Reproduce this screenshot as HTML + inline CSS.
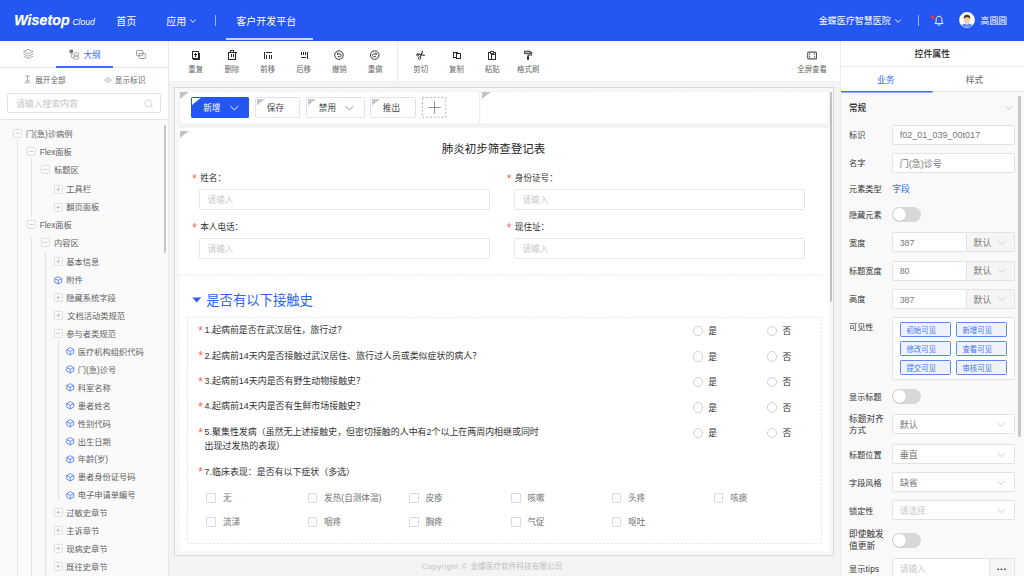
<!DOCTYPE html>
<html lang="zh-CN"><head><meta charset="utf-8"><title>客户开发平台</title>
<style>
html,body{margin:0;padding:0}
body{width:1024px;height:576px;overflow:hidden;position:relative;background:#f4f4f4;font-family:"Liberation Sans","Noto Sans CJK SC",sans-serif;color:#333}
.a{position:absolute;box-sizing:border-box}
.t{position:absolute;white-space:nowrap;line-height:12px;height:12px}
.c{transform:translateX(-50%)}
.b{font-weight:bold}
svg{overflow:visible}
</style></head><body>

<!-- header -->
<div class="a" style="left:0.00px;top:0.00px;width:1024.00px;height:40.50px;background:#2456f2"></div>
<div class="t " style="left:14.30px;top:14px;font-size:14.2px;color:#fff;font-weight:bold;font-style:italic;letter-spacing:0.05px;-webkit-text-stroke:0.25px #fff;line-height:16px;height:16px;margin-top:-2px">Wisetop</div>
<div class="t " style="left:72.40px;top:16px;font-size:8.6px;color:#fff;font-style:italic">Cloud</div>
<div class="t " style="left:116.20px;top:16px;font-size:10px;color:#fff;">首页</div>
<div class="t " style="left:166.20px;top:16px;font-size:10px;color:#fff;">应用</div>
<svg class="a" style="left:188.50px;top:17.50px;" width="8" height="6" viewBox="0 0 8 6"><path d="M1.2 1.5 L4 4.3 L6.8 1.5" fill="none" stroke="#fff" stroke-width="0.9"/></svg>
<div class="a" style="left:214.60px;top:15.20px;width:0.80px;height:10.60px;background:rgba(255,255,255,.55)"></div>
<div class="t " style="left:236.20px;top:16px;font-size:10px;color:#fff;">客户开发平台</div>
<div class="a" style="left:226.00px;top:38.30px;width:87.00px;height:2.20px;background:rgba(255,255,255,.75)"></div>
<div class="t " style="left:818.70px;top:15px;font-size:9px;color:#fff;">金蝶医疗智慧医院</div>
<svg class="a" style="left:893.60px;top:17.70px;" width="8" height="6" viewBox="0 0 8 6"><path d="M1.2 1.5 L4 4.3 L6.8 1.5" fill="none" stroke="#fff" stroke-width="0.9"/></svg>
<div class="a" style="left:918.20px;top:14.50px;width:0.80px;height:11.50px;background:rgba(255,255,255,.55)"></div>
<svg class="a" style="left:933.50px;top:14.50px;" width="10" height="12" viewBox="0 0 10 12"><path d="M5 1.2 C2.9 1.2 2.1 3 2.1 4.8 L2.1 7.2 L1 8.6 L9 8.6 L7.9 7.2 L7.9 4.8 C7.9 3 7.1 1.2 5 1.2 Z" fill="none" stroke="#fff" stroke-width="0.95" stroke-linejoin="round"/><path d="M4 10 L6 10" stroke="#fff" stroke-width="0.9" stroke-linecap="round"/></svg>
<div class="a" style="left:930.90px;top:15.20px;width:3.50px;height:3.50px;background:#ff2d3d;border-radius:50%"></div>
<svg class="a" style="left:959.00px;top:12.30px;" width="16" height="16" viewBox="0 0 16 16"><circle cx="8" cy="8" r="7.9" fill="#fff"/><clipPath id="av"><circle cx="8" cy="8" r="7.6"/></clipPath><g clip-path="url(#av)"><path d="M1.5 16 C1.5 12.6 4.5 11.6 8 11.6 C11.5 11.6 14.5 12.6 14.5 16 Z" fill="#5b8df5"/><path d="M6.6 11.2 L8 13 L9.4 11.2 Z" fill="#fff"/><ellipse cx="8" cy="7.6" rx="3.1" ry="3.7" fill="#f6c9a8"/><path d="M4.7 7.2 C4.3 4 6 2.7 8 2.7 C10.2 2.7 11.7 4 11.3 7.2 C10.8 5.6 9.6 5.2 8 5.2 C6.4 5.2 5.2 5.6 4.7 7.2 Z" fill="#4a2f25"/></g></svg>
<div class="t " style="left:980.60px;top:15px;font-size:8.8px;color:#fff;">高圆圆</div>
<!-- left panel -->
<div class="a" style="left:0.00px;top:40.50px;width:168.50px;height:535.50px;background:#fff;border-right:1px solid #e9e9e9"></div>
<div class="a" style="left:0.00px;top:67.20px;width:168.00px;height:0.80px;background:#e4e4e4"></div>
<svg class="a" style="left:22.80px;top:49.40px;" width="10.6" height="10.2" viewBox="0 0 10.6 10.2"><path d="M5.3 0.4 L10.1 2.65 L5.3 4.9 L0.5 2.65 Z M0.5 5 L5.3 7.3 L10.1 5 M0.5 7.2 L5.3 9.5 L10.1 7.2" fill="none" stroke="#8a8a8a" stroke-width="0.75" stroke-linejoin="round"/></svg>
<svg class="a" style="left:68.50px;top:49.00px;" width="11" height="11" viewBox="0 0 11 11"><rect x="0.6" y="0.6" width="3.4" height="3.4" fill="#777"/><path d="M2.3 4 L2.3 8.6 L5 8.6 M2.3 5.3 L5 5.3" fill="none" stroke="#888" stroke-width="0.7"/><rect x="5" y="3.9" width="4.6" height="2.8" rx="0.6" fill="none" stroke="#888" stroke-width="0.7"/><rect x="5" y="7.4" width="4.6" height="2.8" rx="0.6" fill="none" stroke="#888" stroke-width="0.7"/></svg>
<div class="t " style="left:83.50px;top:49px;font-size:8.6px;color:#3b6df6;">大纲</div>
<svg class="a" style="left:135.00px;top:49.00px;" width="12" height="11" viewBox="0 0 12 11"><rect x="1.5" y="1.4" width="6.4" height="5.3" rx="0.9" fill="none" stroke="#8a8a8a" stroke-width="0.85"/><rect x="3.9" y="4.5" width="6.5" height="5" rx="0.9" fill="none" stroke="#8a8a8a" stroke-width="0.85"/></svg>
<div class="a" style="left:56.20px;top:66.20px;width:56.70px;height:1.80px;background:#3b6df6"></div>
<svg class="a" style="left:24.20px;top:75.30px;" width="7" height="9" viewBox="0 0 7 9"><path d="M1 1 L6 1 M3.5 1 L3.5 6 M1 6 L6 6 M0.5 7.8 L6.5 7.8" fill="none" stroke="#777" stroke-width="0.6"/></svg>
<div class="t " style="left:35.20px;top:75px;font-size:7.65px;color:#666;">展开全部</div>
<svg class="a" style="left:103.80px;top:76.80px;" width="8" height="6" viewBox="0 0 8 6"><path d="M0.4 3 C2 0 6 0 7.6 3 C6 6 2 6 0.4 3 Z" fill="none" stroke="#999" stroke-width="0.5"/><circle cx="4" cy="3" r="1.2" fill="none" stroke="#999" stroke-width="0.5"/></svg>
<div class="t " style="left:114.80px;top:75px;font-size:7.65px;color:#666;">显示标识</div>
<div class="a" style="left:7.40px;top:93.30px;width:153.80px;height:20.10px;background:#fff;border:1px solid #e2e2e2;border-radius:1.5px"></div>
<div class="t " style="left:15.90px;top:98px;font-size:8.9px;color:#c6c6c6;">请输入搜索内容</div>
<svg class="a" style="left:143.50px;top:98.50px;" width="10" height="10" viewBox="0 0 10 10"><circle cx="4.4" cy="4.4" r="3.6" fill="none" stroke="#ccc" stroke-width="0.7"/><path d="M7 7 L9 9" stroke="#ccc" stroke-width="0.7"/></svg>
<div class="a" style="left:0.00px;top:119.00px;width:168.00px;height:457.00px;background:#fafafa;border-top:1px solid #e6e6e6"></div>
<div class="a" style="left:164.00px;top:125.00px;width:2.20px;height:128.00px;background:#c6c6c6;border-radius:1.1px"></div>
<div class="a" style="left:17.10px;top:140.40px;width:0.80px;height:435.60px;background:#e3e3e3"></div>
<div class="a" style="left:31.20px;top:158.20px;width:0.80px;height:59.30px;background:#e3e3e3"></div>
<div class="a" style="left:31.20px;top:237.10px;width:0.80px;height:338.90px;background:#e3e3e3"></div>
<div class="a" style="left:45.20px;top:252.10px;width:0.80px;height:323.90px;background:#e3e3e3"></div>
<div class="a" style="left:58.10px;top:340.40px;width:0.80px;height:160.10px;background:#e3e3e3"></div>
<svg class="a" style="left:13.00px;top:129.35px;" width="8.7" height="8.7" viewBox="0 0 8.7 8.7"><rect x="0.4" y="0.4" width="7.9" height="7.9" rx="0.8" fill="#fff" stroke="#d2d2d2" stroke-width="0.75"/><path d="M2.2 4.35 L6.5 4.35" stroke="#b0b0b0" stroke-width="0.7"/></svg>
<div class="t " style="left:25.70px;top:129px;font-size:8.25px;color:#606060;">门(急)诊病例</div>
<svg class="a" style="left:27.20px;top:147.35px;" width="8.7" height="8.7" viewBox="0 0 8.7 8.7"><rect x="0.4" y="0.4" width="7.9" height="7.9" rx="0.8" fill="#fff" stroke="#d2d2d2" stroke-width="0.75"/><path d="M2.2 4.35 L6.5 4.35" stroke="#b0b0b0" stroke-width="0.7"/></svg>
<div class="t " style="left:39.70px;top:147px;font-size:8.25px;color:#606060;">Flex面板</div>
<svg class="a" style="left:41.20px;top:165.40px;" width="8.7" height="8.7" viewBox="0 0 8.7 8.7"><rect x="0.4" y="0.4" width="7.9" height="7.9" rx="0.8" fill="#fff" stroke="#d2d2d2" stroke-width="0.75"/><path d="M2.2 4.35 L6.5 4.35" stroke="#b0b0b0" stroke-width="0.7"/></svg>
<div class="t " style="left:54.00px;top:165px;font-size:8.25px;color:#606060;">标题区</div>
<svg class="a" style="left:54.00px;top:184.65px;" width="8.7" height="8.7" viewBox="0 0 8.7 8.7"><rect x="0.4" y="0.4" width="7.9" height="7.9" rx="0.8" fill="#fff" stroke="#d2d2d2" stroke-width="0.75"/><path d="M2.2 4.35 L6.5 4.35" stroke="#b0b0b0" stroke-width="0.7"/><path d="M4.35 2.2 L4.35 6.5" stroke="#b0b0b0" stroke-width="0.7"/></svg>
<div class="t " style="left:66.20px;top:184px;font-size:8.25px;color:#606060;">工具栏</div>
<svg class="a" style="left:54.00px;top:202.65px;" width="8.7" height="8.7" viewBox="0 0 8.7 8.7"><rect x="0.4" y="0.4" width="7.9" height="7.9" rx="0.8" fill="#fff" stroke="#d2d2d2" stroke-width="0.75"/><path d="M2.2 4.35 L6.5 4.35" stroke="#b0b0b0" stroke-width="0.7"/><path d="M4.35 2.2 L4.35 6.5" stroke="#b0b0b0" stroke-width="0.7"/></svg>
<div class="t " style="left:66.20px;top:202px;font-size:8.25px;color:#606060;">翻页面板</div>
<svg class="a" style="left:27.20px;top:220.25px;" width="8.7" height="8.7" viewBox="0 0 8.7 8.7"><rect x="0.4" y="0.4" width="7.9" height="7.9" rx="0.8" fill="#fff" stroke="#d2d2d2" stroke-width="0.75"/><path d="M2.2 4.35 L6.5 4.35" stroke="#b0b0b0" stroke-width="0.7"/></svg>
<div class="t " style="left:39.70px;top:220px;font-size:8.25px;color:#606060;">Flex面板</div>
<svg class="a" style="left:41.20px;top:238.45px;" width="8.7" height="8.7" viewBox="0 0 8.7 8.7"><rect x="0.4" y="0.4" width="7.9" height="7.9" rx="0.8" fill="#fff" stroke="#d2d2d2" stroke-width="0.75"/><path d="M2.2 4.35 L6.5 4.35" stroke="#b0b0b0" stroke-width="0.7"/></svg>
<div class="t " style="left:54.00px;top:238px;font-size:8.25px;color:#606060;">内容区</div>
<svg class="a" style="left:54.00px;top:257.35px;" width="8.7" height="8.7" viewBox="0 0 8.7 8.7"><rect x="0.4" y="0.4" width="7.9" height="7.9" rx="0.8" fill="#fff" stroke="#d2d2d2" stroke-width="0.75"/><path d="M2.2 4.35 L6.5 4.35" stroke="#b0b0b0" stroke-width="0.7"/><path d="M4.35 2.2 L4.35 6.5" stroke="#b0b0b0" stroke-width="0.7"/></svg>
<div class="t " style="left:66.20px;top:257px;font-size:8.25px;color:#606060;">基本信息</div>
<svg class="a" style="left:54.00px;top:275.50px;" width="8.4" height="8.6" viewBox="0 0 8.4 8.6"><path d="M4.2 0.6 L7.7 2.5 L7.7 6.1 L4.2 8 L0.7 6.1 L0.7 2.5 Z M0.7 2.5 L4.2 4.4 L7.7 2.5 M4.2 4.4 L4.2 8" fill="none" stroke="#5482f6" stroke-width="0.9" stroke-linejoin="round"/></svg>
<div class="t " style="left:66.20px;top:275px;font-size:8.25px;color:#606060;">附件</div>
<svg class="a" style="left:54.00px;top:293.40px;" width="8.7" height="8.7" viewBox="0 0 8.7 8.7"><rect x="0.4" y="0.4" width="7.9" height="7.9" rx="0.8" fill="#fff" stroke="#d2d2d2" stroke-width="0.75"/><path d="M2.2 4.35 L6.5 4.35" stroke="#b0b0b0" stroke-width="0.7"/><path d="M4.35 2.2 L4.35 6.5" stroke="#b0b0b0" stroke-width="0.7"/></svg>
<div class="t " style="left:66.20px;top:293px;font-size:8.25px;color:#606060;">隐藏系统字段</div>
<svg class="a" style="left:54.00px;top:311.45px;" width="8.7" height="8.7" viewBox="0 0 8.7 8.7"><rect x="0.4" y="0.4" width="7.9" height="7.9" rx="0.8" fill="#fff" stroke="#d2d2d2" stroke-width="0.75"/><path d="M2.2 4.35 L6.5 4.35" stroke="#b0b0b0" stroke-width="0.7"/><path d="M4.35 2.2 L4.35 6.5" stroke="#b0b0b0" stroke-width="0.7"/></svg>
<div class="t " style="left:67.20px;top:311px;font-size:8.25px;color:#606060;">文档活动类规范</div>
<svg class="a" style="left:54.00px;top:329.25px;" width="8.7" height="8.7" viewBox="0 0 8.7 8.7"><rect x="0.4" y="0.4" width="7.9" height="7.9" rx="0.8" fill="#fff" stroke="#d2d2d2" stroke-width="0.75"/><path d="M2.2 4.35 L6.5 4.35" stroke="#b0b0b0" stroke-width="0.7"/></svg>
<div class="t " style="left:66.20px;top:329px;font-size:8.25px;color:#606060;">参与者类规范</div>
<svg class="a" style="left:66.00px;top:347.10px;" width="8.4" height="8.6" viewBox="0 0 8.4 8.6"><path d="M4.2 0.6 L7.7 2.5 L7.7 6.1 L4.2 8 L0.7 6.1 L0.7 2.5 Z M0.7 2.5 L4.2 4.4 L7.7 2.5 M4.2 4.4 L4.2 8" fill="none" stroke="#5482f6" stroke-width="0.9" stroke-linejoin="round"/></svg>
<div class="t " style="left:77.70px;top:347px;font-size:8.25px;color:#606060;">医疗机构组织代码</div>
<svg class="a" style="left:66.00px;top:365.20px;" width="8.4" height="8.6" viewBox="0 0 8.4 8.6"><path d="M4.2 0.6 L7.7 2.5 L7.7 6.1 L4.2 8 L0.7 6.1 L0.7 2.5 Z M0.7 2.5 L4.2 4.4 L7.7 2.5 M4.2 4.4 L4.2 8" fill="none" stroke="#5482f6" stroke-width="0.9" stroke-linejoin="round"/></svg>
<div class="t " style="left:77.70px;top:365px;font-size:8.25px;color:#606060;">门(急)诊号</div>
<svg class="a" style="left:66.00px;top:383.20px;" width="8.4" height="8.6" viewBox="0 0 8.4 8.6"><path d="M4.2 0.6 L7.7 2.5 L7.7 6.1 L4.2 8 L0.7 6.1 L0.7 2.5 Z M0.7 2.5 L4.2 4.4 L7.7 2.5 M4.2 4.4 L4.2 8" fill="none" stroke="#5482f6" stroke-width="0.9" stroke-linejoin="round"/></svg>
<div class="t " style="left:77.70px;top:383px;font-size:8.25px;color:#606060;">科室名称</div>
<svg class="a" style="left:66.00px;top:401.10px;" width="8.4" height="8.6" viewBox="0 0 8.4 8.6"><path d="M4.2 0.6 L7.7 2.5 L7.7 6.1 L4.2 8 L0.7 6.1 L0.7 2.5 Z M0.7 2.5 L4.2 4.4 L7.7 2.5 M4.2 4.4 L4.2 8" fill="none" stroke="#5482f6" stroke-width="0.9" stroke-linejoin="round"/></svg>
<div class="t " style="left:77.70px;top:401px;font-size:8.25px;color:#606060;">患者姓名</div>
<svg class="a" style="left:66.00px;top:419.00px;" width="8.4" height="8.6" viewBox="0 0 8.4 8.6"><path d="M4.2 0.6 L7.7 2.5 L7.7 6.1 L4.2 8 L0.7 6.1 L0.7 2.5 Z M0.7 2.5 L4.2 4.4 L7.7 2.5 M4.2 4.4 L4.2 8" fill="none" stroke="#5482f6" stroke-width="0.9" stroke-linejoin="round"/></svg>
<div class="t " style="left:77.70px;top:419px;font-size:8.25px;color:#606060;">性别代码</div>
<svg class="a" style="left:66.00px;top:436.90px;" width="8.4" height="8.6" viewBox="0 0 8.4 8.6"><path d="M4.2 0.6 L7.7 2.5 L7.7 6.1 L4.2 8 L0.7 6.1 L0.7 2.5 Z M0.7 2.5 L4.2 4.4 L7.7 2.5 M4.2 4.4 L4.2 8" fill="none" stroke="#5482f6" stroke-width="0.9" stroke-linejoin="round"/></svg>
<div class="t " style="left:77.70px;top:437px;font-size:8.25px;color:#606060;">出生日期</div>
<svg class="a" style="left:66.00px;top:454.80px;" width="8.4" height="8.6" viewBox="0 0 8.4 8.6"><path d="M4.2 0.6 L7.7 2.5 L7.7 6.1 L4.2 8 L0.7 6.1 L0.7 2.5 Z M0.7 2.5 L4.2 4.4 L7.7 2.5 M4.2 4.4 L4.2 8" fill="none" stroke="#5482f6" stroke-width="0.9" stroke-linejoin="round"/></svg>
<div class="t " style="left:77.70px;top:454px;font-size:8.25px;color:#606060;">年龄(岁)</div>
<svg class="a" style="left:66.00px;top:472.70px;" width="8.4" height="8.6" viewBox="0 0 8.4 8.6"><path d="M4.2 0.6 L7.7 2.5 L7.7 6.1 L4.2 8 L0.7 6.1 L0.7 2.5 Z M0.7 2.5 L4.2 4.4 L7.7 2.5 M4.2 4.4 L4.2 8" fill="none" stroke="#5482f6" stroke-width="0.9" stroke-linejoin="round"/></svg>
<div class="t " style="left:77.70px;top:472px;font-size:8.25px;color:#606060;">患者身份证号码</div>
<svg class="a" style="left:66.00px;top:490.60px;" width="8.4" height="8.6" viewBox="0 0 8.4 8.6"><path d="M4.2 0.6 L7.7 2.5 L7.7 6.1 L4.2 8 L0.7 6.1 L0.7 2.5 Z M0.7 2.5 L4.2 4.4 L7.7 2.5 M4.2 4.4 L4.2 8" fill="none" stroke="#5482f6" stroke-width="0.9" stroke-linejoin="round"/></svg>
<div class="t " style="left:77.70px;top:490px;font-size:8.25px;color:#606060;">电子申请单编号</div>
<svg class="a" style="left:54.00px;top:508.25px;" width="8.7" height="8.7" viewBox="0 0 8.7 8.7"><rect x="0.4" y="0.4" width="7.9" height="7.9" rx="0.8" fill="#fff" stroke="#d2d2d2" stroke-width="0.75"/><path d="M2.2 4.35 L6.5 4.35" stroke="#b0b0b0" stroke-width="0.7"/><path d="M4.35 2.2 L4.35 6.5" stroke="#b0b0b0" stroke-width="0.7"/></svg>
<div class="t " style="left:66.20px;top:508px;font-size:8.25px;color:#606060;">过敏史章节</div>
<svg class="a" style="left:54.00px;top:526.05px;" width="8.7" height="8.7" viewBox="0 0 8.7 8.7"><rect x="0.4" y="0.4" width="7.9" height="7.9" rx="0.8" fill="#fff" stroke="#d2d2d2" stroke-width="0.75"/><path d="M2.2 4.35 L6.5 4.35" stroke="#b0b0b0" stroke-width="0.7"/><path d="M4.35 2.2 L4.35 6.5" stroke="#b0b0b0" stroke-width="0.7"/></svg>
<div class="t " style="left:66.20px;top:526px;font-size:8.25px;color:#606060;">主诉章节</div>
<svg class="a" style="left:54.00px;top:544.25px;" width="8.7" height="8.7" viewBox="0 0 8.7 8.7"><rect x="0.4" y="0.4" width="7.9" height="7.9" rx="0.8" fill="#fff" stroke="#d2d2d2" stroke-width="0.75"/><path d="M2.2 4.35 L6.5 4.35" stroke="#b0b0b0" stroke-width="0.7"/><path d="M4.35 2.2 L4.35 6.5" stroke="#b0b0b0" stroke-width="0.7"/></svg>
<div class="t " style="left:66.20px;top:544px;font-size:8.25px;color:#606060;">现病史章节</div>
<svg class="a" style="left:54.00px;top:562.15px;" width="8.7" height="8.7" viewBox="0 0 8.7 8.7"><rect x="0.4" y="0.4" width="7.9" height="7.9" rx="0.8" fill="#fff" stroke="#d2d2d2" stroke-width="0.75"/><path d="M2.2 4.35 L6.5 4.35" stroke="#b0b0b0" stroke-width="0.7"/><path d="M4.35 2.2 L4.35 6.5" stroke="#b0b0b0" stroke-width="0.7"/></svg>
<div class="t " style="left:66.20px;top:562px;font-size:8.25px;color:#606060;">既往史章节</div>
<!-- center toolbar -->
<div class="a" style="left:169.00px;top:40.50px;width:671.00px;height:41.00px;background:#fff;border-bottom:1px solid #efefef"></div>
<svg class="a" style="left:189.70px;top:49.40px;shape-rendering:crispEdges" width="12" height="12" viewBox="0 0 12 12"><rect x="2" y="2.4" width="6.9" height="6.9" rx="0.8" fill="none" stroke="#2a2a2a" stroke-width="1"/><path d="M5.45 4.2 L5.45 7.5 M3.8 5.85 L7.1 5.85" stroke="#2a2a2a" stroke-width="1"/><path d="M9.75 3.6 L9.75 10.05 L3.3 10.05" fill="none" stroke="#2a2a2a" stroke-width="1.1"/></svg>
<div class="t c " style="left:195.70px;top:64px;font-size:7.42px;color:#666;">重复</div>
<svg class="a" style="left:225.80px;top:49.40px;shape-rendering:crispEdges" width="12" height="12" viewBox="0 0 12 12"><path d="M1.5 3 L10.6 3 M4.5 3 L4.5 1.6 L7.6 1.6 L7.6 3 M2.8 3 L2.8 10 L9.3 10 L9.3 3 M5.05 5 L5.05 8.3 M7.05 5 L7.05 8.3" fill="none" stroke="#2a2a2a" stroke-width="1"/></svg>
<div class="t c " style="left:231.80px;top:64px;font-size:7.42px;color:#666;">删除</div>
<svg class="a" style="left:261.75px;top:49.40px;shape-rendering:crispEdges" width="12" height="12" viewBox="0 0 12 12"><path d="M2.75 3 L2.75 10.3 M4.3 3.85 L9.9 3.85 M4.9 5.5 L4.9 10.3 M7.05 5.5 L7.05 10.3 M9.25 5.5 L9.25 10.3" fill="none" stroke="#2a2a2a" stroke-width="1"/></svg>
<div class="t c " style="left:267.75px;top:64px;font-size:7.42px;color:#666;">前移</div>
<svg class="a" style="left:297.55px;top:49.40px;shape-rendering:crispEdges" width="12" height="12" viewBox="0 0 12 12"><path d="M9.1 3.1 L9.1 10.1 M2.8 8.6 L7.9 8.6 M3.25 3.1 L3.25 6.4 M5.15 3.1 L5.15 6.4 M7.05 3.1 L7.05 6.4" fill="none" stroke="#2a2a2a" stroke-width="1"/></svg>
<div class="t c " style="left:303.55px;top:64px;font-size:7.42px;color:#666;">后移</div>
<svg class="a" style="left:333.30px;top:49.40px;" width="12" height="12" viewBox="0 0 12 12"><circle cx="5.95" cy="6.1" r="4.25" fill="none" stroke="#2a2a2a" stroke-width="0.95"/><path d="M4 4.9 L7 4.9 C8.5 4.9 8.5 7.7 7 7.7 L4.6 7.7 M5.3 3.6 L4 4.9 L5.3 6.2" fill="none" stroke="#2a2a2a" stroke-width="0.85"/></svg>
<div class="t c " style="left:339.30px;top:64px;font-size:7.42px;color:#666;">撤销</div>
<svg class="a" style="left:369.20px;top:49.40px;" width="12" height="12" viewBox="0 0 12 12"><circle cx="5.7" cy="6.1" r="4.25" fill="none" stroke="#2a2a2a" stroke-width="0.95"/><path d="M7.7 4.9 L4.7 4.9 C3.2 4.9 3.2 7.7 4.7 7.7 L7.1 7.7 M6.4 3.6 L7.7 4.9 L6.4 6.2" fill="none" stroke="#2a2a2a" stroke-width="0.85"/></svg>
<div class="t c " style="left:375.20px;top:64px;font-size:7.42px;color:#666;">重做</div>
<svg class="a" style="left:414.70px;top:49.40px;" width="12" height="12" viewBox="0 0 12 12"><path d="M7.7 1.8 L5.2 8 M1.9 4.7 L9.8 6.4" fill="none" stroke="#2a2a2a" stroke-width="1.05"/><circle cx="4.6" cy="9.2" r="1.2" fill="none" stroke="#2a2a2a" stroke-width="0.85"/><circle cx="2.7" cy="5.9" r="1.1" fill="none" stroke="#2a2a2a" stroke-width="0.85"/></svg>
<div class="t c " style="left:420.70px;top:64px;font-size:7.42px;color:#666;">剪切</div>
<svg class="a" style="left:450.50px;top:49.40px;shape-rendering:crispEdges" width="12" height="12" viewBox="0 0 12 12"><rect x="2.5" y="3.1" width="3.7" height="5.3" fill="none" stroke="#2a2a2a" stroke-width="1"/><rect x="5" y="4.1" width="4.3" height="5.6" fill="#fff" stroke="#2a2a2a" stroke-width="1"/></svg>
<div class="t c " style="left:456.50px;top:64px;font-size:7.42px;color:#666;">复制</div>
<svg class="a" style="left:486.20px;top:49.40px;shape-rendering:crispEdges" width="12" height="12" viewBox="0 0 12 12"><path d="M4.1 3.4 L2.2 3.4 L2.2 10 L5.4 10 M7.5 3.4 L9.4 3.4 L9.4 5.6" fill="none" stroke="#2a2a2a" stroke-width="1"/><rect x="4.1" y="2" width="3.4" height="2" fill="none" stroke="#2a2a2a" stroke-width="0.9"/><rect x="5.5" y="5.8" width="4.1" height="4.3" fill="none" stroke="#2a2a2a" stroke-width="1"/></svg>
<div class="t c " style="left:492.20px;top:64px;font-size:7.42px;color:#666;">粘贴</div>
<svg class="a" style="left:522.20px;top:49.40px;" width="12" height="12" viewBox="0 0 12 12"><rect x="2.4" y="2.2" width="6.2" height="2.5" rx="0.6" fill="#bbb" stroke="#2a2a2a" stroke-width="0.95"/><path d="M8.6 3.4 L9.7 3.4 L9.7 6.1 L6 6.1 L6 7.4" fill="none" stroke="#2a2a2a" stroke-width="0.95"/><rect x="4.95" y="7.3" width="2.1" height="3.4" rx="0.3" fill="#2a2a2a"/></svg>
<div class="t c " style="left:528.20px;top:64px;font-size:7.42px;color:#666;">格式刷</div>
<svg class="a" style="left:806.10px;top:49.40px;" width="12" height="12" viewBox="0 0 12 12"><rect x="1.7" y="3.1" width="8.8" height="6.8" rx="1" fill="none" stroke="#555" stroke-width="1.1"/><path d="M3.5 5.7 L3.5 4.9 L4.3 4.9 M7.9 4.9 L8.7 4.9 L8.7 5.7 M8.7 7.3 L8.7 8.1 L7.9 8.1 M4.3 8.1 L3.5 8.1 L3.5 7.3" fill="none" stroke="#333" stroke-width="0.9"/></svg>
<div class="t c " style="left:812.10px;top:64px;font-size:7.42px;color:#666;">全屏查看</div>
<div class="a" style="left:397.40px;top:40.50px;width:0.80px;height:40.50px;background:#e9e9e9"></div>
<!-- canvas -->
<div class="a" style="left:174.30px;top:86.80px;width:660.00px;height:469.60px;background:#f8f8f8;border:1px solid #d9d9d9"></div>
<div class="a" style="left:178.70px;top:90.80px;width:650.60px;height:460.50px;background:#fff"></div>
<div class="a" style="left:178.70px;top:124.10px;width:650.60px;height:4.10px;background:#f4f4f4"></div>
<div class="a" style="left:178.60px;top:90.80px;width:650.60px;height:33.30px;background:#fff"></div>
<svg class="a" style="left:178.60px;top:90.80px" width="301.30" height="33.30"><rect x="0.4" y="0.4" width="300.50" height="32.50" fill="none" stroke="#e2e2e2" stroke-width="0.8" stroke-dasharray="2.2 1.7"/></svg>
<svg class="a" style="left:479.10px;top:90.80px" width="350.40" height="33.30"><rect x="0.4" y="0.4" width="349.60" height="32.50" fill="none" stroke="#e2e2e2" stroke-width="0.8" stroke-dasharray="2.2 1.7"/></svg>
<svg class="a" style="left:180.20px;top:92.10px;" width="8.8" height="7.040000000000001" viewBox="0 0 8.8 7.040000000000001"><path d="M0 0 L8.8 0 L0 7.040000000000001 Z" fill="#c2c2c2"/></svg>
<svg class="a" style="left:481.80px;top:92.10px;" width="8.8" height="7.040000000000001" viewBox="0 0 8.8 7.040000000000001"><path d="M0 0 L8.8 0 L0 7.040000000000001 Z" fill="#c2c2c2"/></svg>
<div class="a" style="left:190.90px;top:97.20px;width:58.00px;height:20.50px;background:#2456f2;border-radius:1.5px"></div>
<svg class="a" style="left:192.00px;top:98.40px;" width="8.6" height="6.88" viewBox="0 0 8.6 6.88"><path d="M0 0 L8.6 0 L0 6.88 Z" fill="#fff"/></svg>
<div class="t " style="left:203.20px;top:102px;font-size:8.6px;color:#fff;">新增</div>
<svg class="a" style="left:229.60px;top:104.90px;" width="9" height="6" viewBox="0 0 9 6"><path d="M0.4 1 L4.4 4.8 L8.4 1" fill="none" stroke="#fff" stroke-width="0.95"/></svg>
<div class="a" style="left:254.90px;top:97.20px;width:44.90px;height:20.50px;background:#fff;border:1px solid #e4e4e4;border-radius:1.5px"></div>
<svg class="a" style="left:256.70px;top:98.60px;" width="8" height="6.4" viewBox="0 0 8 6.4"><path d="M0 0 L8 0 L0 6.4 Z" fill="#c6c6c6"/></svg>
<div class="t " style="left:266.80px;top:102px;font-size:8.6px;color:#444;">保存</div>
<div class="a" style="left:306.30px;top:97.20px;width:58.60px;height:20.50px;background:#fff;border:1px solid #e4e4e4;border-radius:1.5px"></div>
<svg class="a" style="left:308.10px;top:98.60px;" width="8" height="6.4" viewBox="0 0 8 6.4"><path d="M0 0 L8 0 L0 6.4 Z" fill="#c6c6c6"/></svg>
<div class="t " style="left:318.80px;top:102px;font-size:8.6px;color:#444;">禁用</div>
<svg class="a" style="left:345.00px;top:104.90px;" width="9" height="6" viewBox="0 0 9 6"><path d="M0.4 1 L4.4 4.8 L8.4 1" fill="none" stroke="#777" stroke-width="0.8"/></svg>
<div class="a" style="left:370.30px;top:97.20px;width:45.60px;height:20.50px;background:#fff;border:1px solid #e4e4e4;border-radius:1.5px"></div>
<svg class="a" style="left:372.10px;top:98.60px;" width="8" height="6.4" viewBox="0 0 8 6.4"><path d="M0 0 L8 0 L0 6.4 Z" fill="#c6c6c6"/></svg>
<div class="t " style="left:382.80px;top:102px;font-size:8.6px;color:#444;">推出</div>
<svg class="a" style="left:421.60px;top:97.10px" width="24.20" height="20.60"><rect x="0.4" y="0.4" width="23.40" height="19.80" fill="#fff" stroke="#9a9a9a" stroke-width="0.8" stroke-dasharray="1.9 1.9"/></svg>
<svg class="a" style="left:427.80px;top:101.00px;" width="13" height="13" viewBox="0 0 13 13"><path d="M6.5 0.3 L6.5 12.7 M0.3 6.5 L12.7 6.5" stroke="#666" stroke-width="0.7"/></svg>
<svg class="a" style="left:178.70px;top:274.60px" width="651.60" height="1.00"><line x1="0.00" y1="0.00" x2="650.60" y2="0.00" stroke="#e2e2e2" stroke-width="0.8" stroke-dasharray="2.2 1.7"/></svg>
<svg class="a" style="left:180.20px;top:130.60px;" width="8.8" height="7.040000000000001" viewBox="0 0 8.8 7.040000000000001"><path d="M0 0 L8.8 0 L0 7.040000000000001 Z" fill="#c2c2c2"/></svg>
<div class="t c " style="left:493.40px;top:143px;font-size:11.5px;color:#222;">肺炎初步筛查登记表</div>
<div class="t" style="left:192.25px;top:173px;font-size:12px;color:#f7635a">*</div>
<div class="t " style="left:200.20px;top:172px;font-size:8.6px;color:#333;">姓名：</div>
<div class="a" style="left:199.40px;top:189.30px;width:290.40px;height:20.30px;background:#fff;border:1px solid #e7e7e7;border-radius:2px"></div>
<div class="t " style="left:207.60px;top:194px;font-size:8.6px;color:#cacaca;">请输入</div>
<div class="t" style="left:506.85px;top:173px;font-size:12px;color:#f7635a">*</div>
<div class="t " style="left:514.80px;top:172px;font-size:8.6px;color:#333;">身份证号：</div>
<div class="a" style="left:514.30px;top:189.30px;width:290.40px;height:20.30px;background:#fff;border:1px solid #e7e7e7;border-radius:2px"></div>
<div class="t " style="left:522.50px;top:194px;font-size:8.6px;color:#cacaca;">请输入</div>
<div class="t" style="left:192.25px;top:222px;font-size:12px;color:#f7635a">*</div>
<div class="t " style="left:200.20px;top:221px;font-size:8.6px;color:#333;">本人电话：</div>
<div class="a" style="left:199.40px;top:238.40px;width:290.40px;height:20.80px;background:#fff;border:1px solid #e7e7e7;border-radius:2px"></div>
<div class="t " style="left:207.60px;top:243px;font-size:8.6px;color:#cacaca;">请输入</div>
<div class="t" style="left:506.85px;top:222px;font-size:12px;color:#f7635a">*</div>
<div class="t " style="left:514.80px;top:221px;font-size:8.6px;color:#333;">现住址：</div>
<div class="a" style="left:514.30px;top:238.40px;width:290.40px;height:20.80px;background:#fff;border:1px solid #e7e7e7;border-radius:2px"></div>
<div class="t " style="left:522.50px;top:243px;font-size:8.6px;color:#cacaca;">请输入</div>
<svg class="a" style="left:178.80px;top:275.00px" width="1.00" height="277.30"><line x1="0.00" y1="0.00" x2="0.00" y2="276.30" stroke="#ececec" stroke-width="0.8" stroke-dasharray="2.2 1.7"/></svg>
<svg class="a" style="left:192.20px;top:297.40px;" width="9.4" height="6" viewBox="0 0 9.4 6"><path d="M0.2 0.5 L9.2 0.5 L4.7 5.5 Z" fill="#2f61f3"/></svg>
<div class="t " style="left:206.20px;top:295px;font-size:13.35px;color:#3163f3;line-height:18px;height:18px;margin-top:-3px">是否有以下接触史</div>
<svg class="a" style="left:187.20px;top:316.80px" width="634.80" height="226.90"><rect x="0.4" y="0.4" width="634.00" height="226.10" fill="none" stroke="#e2e2e2" stroke-width="0.8" stroke-dasharray="2.2 1.7"/></svg>
<div class="t" style="left:198.15px;top:325px;font-size:12px;color:#f7635a">*</div>
<div class="t " style="left:204.60px;top:324px;font-size:8.95px;color:#333;">1.起病前是否在武汉居住，旅行过？</div>
<div class="t" style="left:198.15px;top:350px;font-size:12px;color:#f7635a">*</div>
<div class="t " style="left:204.60px;top:350px;font-size:8.95px;color:#333;">2.起病前14天内是否接触过武汉居住、旅行过人员或类似症状的病人？</div>
<div class="t" style="left:198.15px;top:376px;font-size:12px;color:#f7635a">*</div>
<div class="t " style="left:204.60px;top:375px;font-size:8.95px;color:#333;">3.起病前14天内是否有野生动物接触史？</div>
<div class="t" style="left:198.15px;top:401px;font-size:12px;color:#f7635a">*</div>
<div class="t " style="left:204.60px;top:400px;font-size:8.95px;color:#333;">4.起病前14天内是否有生鲜市场接触史？</div>
<div class="t" style="left:198.15px;top:427px;font-size:12px;color:#f7635a">*</div>
<div class="t " style="left:204.60px;top:426px;font-size:8.95px;color:#333;">5.聚集性发病（虽然无上述接触史，但密切接触的人中有2个以上在两周内相继或同时</div>
<div class="t" style="left:198.15px;top:466px;font-size:12px;color:#f7635a">*</div>
<div class="t " style="left:204.60px;top:466px;font-size:8.95px;color:#333;">7.临床表现：是否有以下症状（多选）</div>
<div class="t " style="left:204.60px;top:440px;font-size:8.95px;color:#333;">出现过发热的表现）</div>
<div class="a" style="left:693.00px;top:325.90px;width:10.20px;height:10.20px;background:#fff;border:1px solid #d2d2d2;border-radius:50%"></div>
<div class="t " style="left:708.30px;top:325px;font-size:8.8px;color:#333;">是</div>
<div class="a" style="left:767.20px;top:325.90px;width:10.20px;height:10.20px;background:#fff;border:1px solid #d2d2d2;border-radius:50%"></div>
<div class="t " style="left:782.60px;top:325px;font-size:8.8px;color:#333;">否</div>
<div class="a" style="left:693.00px;top:351.40px;width:10.20px;height:10.20px;background:#fff;border:1px solid #d2d2d2;border-radius:50%"></div>
<div class="t " style="left:708.30px;top:351px;font-size:8.8px;color:#333;">是</div>
<div class="a" style="left:767.20px;top:351.40px;width:10.20px;height:10.20px;background:#fff;border:1px solid #d2d2d2;border-radius:50%"></div>
<div class="t " style="left:782.60px;top:351px;font-size:8.8px;color:#333;">否</div>
<div class="a" style="left:693.00px;top:376.90px;width:10.20px;height:10.20px;background:#fff;border:1px solid #d2d2d2;border-radius:50%"></div>
<div class="t " style="left:708.30px;top:376px;font-size:8.8px;color:#333;">是</div>
<div class="a" style="left:767.20px;top:376.90px;width:10.20px;height:10.20px;background:#fff;border:1px solid #d2d2d2;border-radius:50%"></div>
<div class="t " style="left:782.60px;top:376px;font-size:8.8px;color:#333;">否</div>
<div class="a" style="left:693.00px;top:402.40px;width:10.20px;height:10.20px;background:#fff;border:1px solid #d2d2d2;border-radius:50%"></div>
<div class="t " style="left:708.30px;top:402px;font-size:8.8px;color:#333;">是</div>
<div class="a" style="left:767.20px;top:402.40px;width:10.20px;height:10.20px;background:#fff;border:1px solid #d2d2d2;border-radius:50%"></div>
<div class="t " style="left:782.60px;top:402px;font-size:8.8px;color:#333;">否</div>
<div class="a" style="left:693.00px;top:427.90px;width:10.20px;height:10.20px;background:#fff;border:1px solid #d2d2d2;border-radius:50%"></div>
<div class="t " style="left:708.30px;top:427px;font-size:8.8px;color:#333;">是</div>
<div class="a" style="left:767.20px;top:427.90px;width:10.20px;height:10.20px;background:#fff;border:1px solid #d2d2d2;border-radius:50%"></div>
<div class="t " style="left:782.60px;top:427px;font-size:8.8px;color:#333;">否</div>
<div class="a" style="left:206.30px;top:492.90px;width:9.80px;height:9.80px;background:#fff;border:1px solid #dadada;border-radius:1px"></div>
<div class="t " style="left:222.90px;top:492px;font-size:8.6px;color:#737373;">无</div>
<div class="a" style="left:307.50px;top:492.90px;width:9.80px;height:9.80px;background:#fff;border:1px solid #dadada;border-radius:1px"></div>
<div class="t " style="left:324.10px;top:492px;font-size:8.6px;color:#737373;">发热(自测体温)</div>
<div class="a" style="left:408.90px;top:492.90px;width:9.80px;height:9.80px;background:#fff;border:1px solid #dadada;border-radius:1px"></div>
<div class="t " style="left:425.50px;top:492px;font-size:8.6px;color:#737373;">皮疹</div>
<div class="a" style="left:510.80px;top:492.90px;width:9.80px;height:9.80px;background:#fff;border:1px solid #dadada;border-radius:1px"></div>
<div class="t " style="left:527.40px;top:492px;font-size:8.6px;color:#737373;">咳嗽</div>
<div class="a" style="left:611.60px;top:492.90px;width:9.80px;height:9.80px;background:#fff;border:1px solid #dadada;border-radius:1px"></div>
<div class="t " style="left:628.20px;top:492px;font-size:8.6px;color:#737373;">头疼</div>
<div class="a" style="left:713.60px;top:492.90px;width:9.80px;height:9.80px;background:#fff;border:1px solid #dadada;border-radius:1px"></div>
<div class="t " style="left:730.20px;top:492px;font-size:8.6px;color:#737373;">咳痰</div>
<div class="a" style="left:206.30px;top:516.80px;width:9.80px;height:9.80px;background:#fff;border:1px solid #dadada;border-radius:1px"></div>
<div class="t " style="left:222.90px;top:516px;font-size:8.6px;color:#737373;">流涕</div>
<div class="a" style="left:307.50px;top:516.80px;width:9.80px;height:9.80px;background:#fff;border:1px solid #dadada;border-radius:1px"></div>
<div class="t " style="left:324.10px;top:516px;font-size:8.6px;color:#737373;">咽疼</div>
<div class="a" style="left:408.90px;top:516.80px;width:9.80px;height:9.80px;background:#fff;border:1px solid #dadada;border-radius:1px"></div>
<div class="t " style="left:425.50px;top:516px;font-size:8.6px;color:#737373;">胸疼</div>
<div class="a" style="left:510.80px;top:516.80px;width:9.80px;height:9.80px;background:#fff;border:1px solid #dadada;border-radius:1px"></div>
<div class="t " style="left:527.40px;top:516px;font-size:8.6px;color:#737373;">气促</div>
<div class="a" style="left:611.60px;top:516.80px;width:9.80px;height:9.80px;background:#fff;border:1px solid #dadada;border-radius:1px"></div>
<div class="t " style="left:628.20px;top:516px;font-size:8.6px;color:#737373;">呕吐</div>
<div class="a" style="left:829.50px;top:91.50px;width:2.40px;height:210.40px;background:#c0c0c0;border-radius:1.2px"></div>
<div class="t c " style="left:492.00px;top:561px;font-size:7.66px;color:#bdbdbd;"><span style="letter-spacing:0.5px">Copyright © </span>金蝶医疗软件科技有限公司</div>
<!-- right panel -->
<div class="a" style="left:840.00px;top:40.50px;width:184.00px;height:535.50px;background:#f9f9f9;border-left:1px solid #ececec"></div>
<div class="a" style="left:840.50px;top:40.50px;width:183.50px;height:51.20px;background:#fff"></div>
<div class="t c " style="left:932.30px;top:48px;font-size:8.9px;color:#222;font-weight:500">控件属性</div>
<div class="a" style="left:840.50px;top:66.00px;width:183.50px;height:0.80px;background:#ececec"></div>
<div class="t c " style="left:885.80px;top:74px;font-size:8.7px;color:#3b6df6;">业务</div>
<div class="t c " style="left:974.50px;top:74px;font-size:8.7px;color:#666;">样式</div>
<div class="a" style="left:840.50px;top:91.00px;width:183.50px;height:0.80px;background:#e6e6e6"></div>
<svg class="a" style="left:840.50px;top:90.70px;" width="92" height="2" viewBox="0 0 92 2"><rect x="0" y="0" width="91.7" height="1.5" fill="#3b6df6"/></svg>
<div class="a" style="left:1018.00px;top:96.00px;width:2.60px;height:341.00px;background:#c6c6c6;border-radius:1.3px"></div>
<div class="t " style="left:848.90px;top:102px;font-size:8.6px;color:#222;font-weight:500">常规</div>
<svg class="a" style="left:1004.80px;top:104.60px;" width="8" height="6" viewBox="0 0 8 6"><path d="M0.5 1 L4 4.5 L7.5 1" fill="none" stroke="#c4c4c4" stroke-width="0.8"/></svg>
<div class="t " style="left:849.00px;top:130px;font-size:8.15px;color:#333;">标识</div>
<div class="a" style="left:892.00px;top:125.00px;width:122.60px;height:20.00px;background:#fff;border:1px solid #e3e3e3;border-radius:1.5px"></div>
<div class="t " style="left:899.70px;top:129px;font-size:9.05px;color:#777;">f02_01_039_00t017</div>
<div class="t " style="left:849.00px;top:158px;font-size:8.15px;color:#333;">名字</div>
<div class="a" style="left:892.00px;top:153.00px;width:122.60px;height:20.00px;background:#fff;border:1px solid #e3e3e3;border-radius:1.5px"></div>
<div class="t " style="left:899.70px;top:158px;font-size:9.05px;color:#777;">门(急)诊号</div>
<div class="t " style="left:849.00px;top:184px;font-size:8.15px;color:#333;">元素类型</div>
<div class="t " style="left:892.20px;top:183px;font-size:8.9px;color:#2f6bdc;">字段</div>
<div class="t " style="left:849.00px;top:210px;font-size:8.15px;color:#333;">隐藏元素</div>
<div class="a" style="left:892.20px;top:206.80px;width:29.20px;height:15.20px;background:#d8d8d8;border-radius:7.6px"></div>
<div class="a" style="left:893.20px;top:207.80px;width:13.20px;height:13.20px;background:#fff;border-radius:50%;box-shadow:0 0.5px 1px rgba(0,0,0,.18)"></div>
<div class="t " style="left:849.00px;top:238px;font-size:8.15px;color:#333;">宽度</div>
<div class="a" style="left:892.00px;top:232.00px;width:122.60px;height:20.00px;background:#fff;border:1px solid #e3e3e3;border-radius:1.5px"></div>
<div class="a" style="left:966.00px;top:232.00px;width:48.60px;height:20.00px;background:#f5f5f5;border:1px solid #e3e3e3;border-radius:0 1.5px 1.5px 0"></div>
<div class="t " style="left:899.70px;top:237px;font-size:8.9px;color:#777;">387</div>
<div class="t " style="left:973.60px;top:237px;font-size:8.8px;color:#777;">默认</div>
<svg class="a" style="left:997.60px;top:239.50px;" width="8" height="6" viewBox="0 0 8 6"><path d="M0.5 1 L4 4.5 L7.5 1" fill="none" stroke="#c4c4c4" stroke-width="0.8"/></svg>
<div class="t " style="left:849.00px;top:266px;font-size:8.15px;color:#333;">标题宽度</div>
<div class="a" style="left:892.00px;top:261.00px;width:122.60px;height:20.00px;background:#fff;border:1px solid #e3e3e3;border-radius:1.5px"></div>
<div class="a" style="left:966.00px;top:261.00px;width:48.60px;height:20.00px;background:#f5f5f5;border:1px solid #e3e3e3;border-radius:0 1.5px 1.5px 0"></div>
<div class="t " style="left:899.70px;top:265px;font-size:8.9px;color:#777;">80</div>
<div class="t " style="left:973.60px;top:265px;font-size:8.8px;color:#777;">默认</div>
<svg class="a" style="left:997.60px;top:267.80px;" width="8" height="6" viewBox="0 0 8 6"><path d="M0.5 1 L4 4.5 L7.5 1" fill="none" stroke="#c4c4c4" stroke-width="0.8"/></svg>
<div class="t " style="left:849.00px;top:294px;font-size:8.15px;color:#333;">高度</div>
<div class="a" style="left:892.00px;top:289.00px;width:122.60px;height:20.00px;background:#fff;border:1px solid #e3e3e3;border-radius:1.5px"></div>
<div class="a" style="left:966.00px;top:289.00px;width:48.60px;height:20.00px;background:#f5f5f5;border:1px solid #e3e3e3;border-radius:0 1.5px 1.5px 0"></div>
<div class="t " style="left:899.70px;top:294px;font-size:8.9px;color:#777;">387</div>
<div class="t " style="left:973.60px;top:294px;font-size:8.8px;color:#777;">默认</div>
<svg class="a" style="left:997.60px;top:296.10px;" width="8" height="6" viewBox="0 0 8 6"><path d="M0.5 1 L4 4.5 L7.5 1" fill="none" stroke="#c4c4c4" stroke-width="0.8"/></svg>
<div class="t " style="left:849.00px;top:322px;font-size:8.15px;color:#333;">可见性</div>
<div class="a" style="left:892.00px;top:317.00px;width:122.60px;height:63.40px;background:#fff;border:1px solid #e3e3e3;border-radius:1.5px"></div>
<div class="a" style="left:900.00px;top:322.00px;width:50.60px;height:15.20px;background:#eef2ff;border:1px solid #5d86f7;border-radius:1.5px"></div>
<div class="t " style="left:906.40px;top:325px;font-size:7.45px;color:#4674f5;">初始可见</div>
<div class="a" style="left:956.00px;top:322.00px;width:50.60px;height:15.20px;background:#eef2ff;border:1px solid #5d86f7;border-radius:1.5px"></div>
<div class="t " style="left:962.40px;top:325px;font-size:7.45px;color:#4674f5;">新增可见</div>
<div class="a" style="left:900.00px;top:341.00px;width:50.60px;height:15.20px;background:#eef2ff;border:1px solid #5d86f7;border-radius:1.5px"></div>
<div class="t " style="left:906.40px;top:344px;font-size:7.45px;color:#4674f5;">修改可见</div>
<div class="a" style="left:956.00px;top:341.00px;width:50.60px;height:15.20px;background:#eef2ff;border:1px solid #5d86f7;border-radius:1.5px"></div>
<div class="t " style="left:962.40px;top:344px;font-size:7.45px;color:#4674f5;">查看可见</div>
<div class="a" style="left:900.00px;top:360.00px;width:50.60px;height:15.20px;background:#eef2ff;border:1px solid #5d86f7;border-radius:1.5px"></div>
<div class="t " style="left:906.40px;top:363px;font-size:7.45px;color:#4674f5;">提交可见</div>
<div class="a" style="left:956.00px;top:360.00px;width:50.60px;height:15.20px;background:#eef2ff;border:1px solid #5d86f7;border-radius:1.5px"></div>
<div class="t " style="left:962.40px;top:363px;font-size:7.45px;color:#4674f5;">审核可见</div>
<div class="t " style="left:849.00px;top:392px;font-size:8.15px;color:#333;">显示标题</div>
<div class="a" style="left:892.20px;top:388.70px;width:29.20px;height:15.20px;background:#d8d8d8;border-radius:7.6px"></div>
<div class="a" style="left:893.20px;top:389.70px;width:13.20px;height:13.20px;background:#fff;border-radius:50%;box-shadow:0 0.5px 1px rgba(0,0,0,.18)"></div>
<div class="t " style="left:849.00px;top:413px;font-size:8.7px;color:#333;">标题对齐</div>
<div class="t " style="left:849.00px;top:424px;font-size:8.5px;color:#333;">方式</div>
<div class="a" style="left:892.00px;top:414.00px;width:122.60px;height:20.00px;background:#fff;border:1px solid #e3e3e3;border-radius:1.5px"></div>
<div class="t " style="left:899.70px;top:419px;font-size:9.05px;color:#777;">默认</div>
<svg class="a" style="left:996.90px;top:421.70px;" width="8" height="6" viewBox="0 0 8 6"><path d="M0.5 1 L4 4.5 L7.5 1" fill="none" stroke="#bdbdbd" stroke-width="0.8"/></svg>
<div class="a" style="left:892.00px;top:444.00px;width:122.60px;height:20.00px;background:#fff;border:1px solid #e3e3e3;border-radius:1.5px"></div>
<div class="t " style="left:899.70px;top:449px;font-size:9.05px;color:#777;">垂直</div>
<svg class="a" style="left:996.90px;top:451.80px;" width="8" height="6" viewBox="0 0 8 6"><path d="M0.5 1 L4 4.5 L7.5 1" fill="none" stroke="#bdbdbd" stroke-width="0.8"/></svg>
<div class="a" style="left:892.00px;top:472.00px;width:122.60px;height:20.00px;background:#fff;border:1px solid #e3e3e3;border-radius:1.5px"></div>
<div class="t " style="left:899.70px;top:477px;font-size:9.05px;color:#777;">缺省</div>
<svg class="a" style="left:996.90px;top:479.80px;" width="8" height="6" viewBox="0 0 8 6"><path d="M0.5 1 L4 4.5 L7.5 1" fill="none" stroke="#bdbdbd" stroke-width="0.8"/></svg>
<div class="a" style="left:892.00px;top:500.00px;width:122.60px;height:20.00px;background:#fff;border:1px solid #e3e3e3;border-radius:1.5px"></div>
<div class="t " style="left:899.70px;top:505px;font-size:8.7px;color:#c8c8c8;">请选择</div>
<svg class="a" style="left:996.90px;top:507.70px;" width="8" height="6" viewBox="0 0 8 6"><path d="M0.5 1 L4 4.5 L7.5 1" fill="none" stroke="#bdbdbd" stroke-width="0.8"/></svg>
<div class="t " style="left:849.00px;top:450px;font-size:8.15px;color:#333;">标题位置</div>
<div class="t " style="left:849.00px;top:478px;font-size:8.15px;color:#333;">字段风格</div>
<div class="t " style="left:849.00px;top:506px;font-size:8.15px;color:#333;">锁定性</div>
<div class="t " style="left:849.00px;top:528px;font-size:8.7px;color:#333;">即使触发</div>
<div class="t " style="left:849.00px;top:540px;font-size:8.7px;color:#333;">值更新</div>
<div class="a" style="left:892.20px;top:532.50px;width:29.20px;height:15.20px;background:#d8d8d8;border-radius:7.6px"></div>
<div class="a" style="left:893.20px;top:533.50px;width:13.20px;height:13.20px;background:#fff;border-radius:50%;box-shadow:0 0.5px 1px rgba(0,0,0,.18)"></div>
<div class="t " style="left:849.00px;top:564px;font-size:8.2px;color:#333;">显示<span style="letter-spacing:0.35px">tips</span></div>
<div class="a" style="left:892.00px;top:558.00px;width:122.60px;height:20.00px;background:#fff;border:1px solid #e3e3e3;border-radius:1.5px"></div>
<div class="a" style="left:989.00px;top:558.00px;width:25.60px;height:20.00px;background:#f5f5f5;border:1px solid #e3e3e3;border-radius:0 1.5px 1.5px 0"></div>
<div class="t " style="left:899.70px;top:563px;font-size:8.7px;color:#c8c8c8;">请输入</div>
<div class="t c " style="left:1001.80px;top:561px;font-size:9.5px;color:#222;font-weight:bold;letter-spacing:0.7px">...</div>
</body></html>
